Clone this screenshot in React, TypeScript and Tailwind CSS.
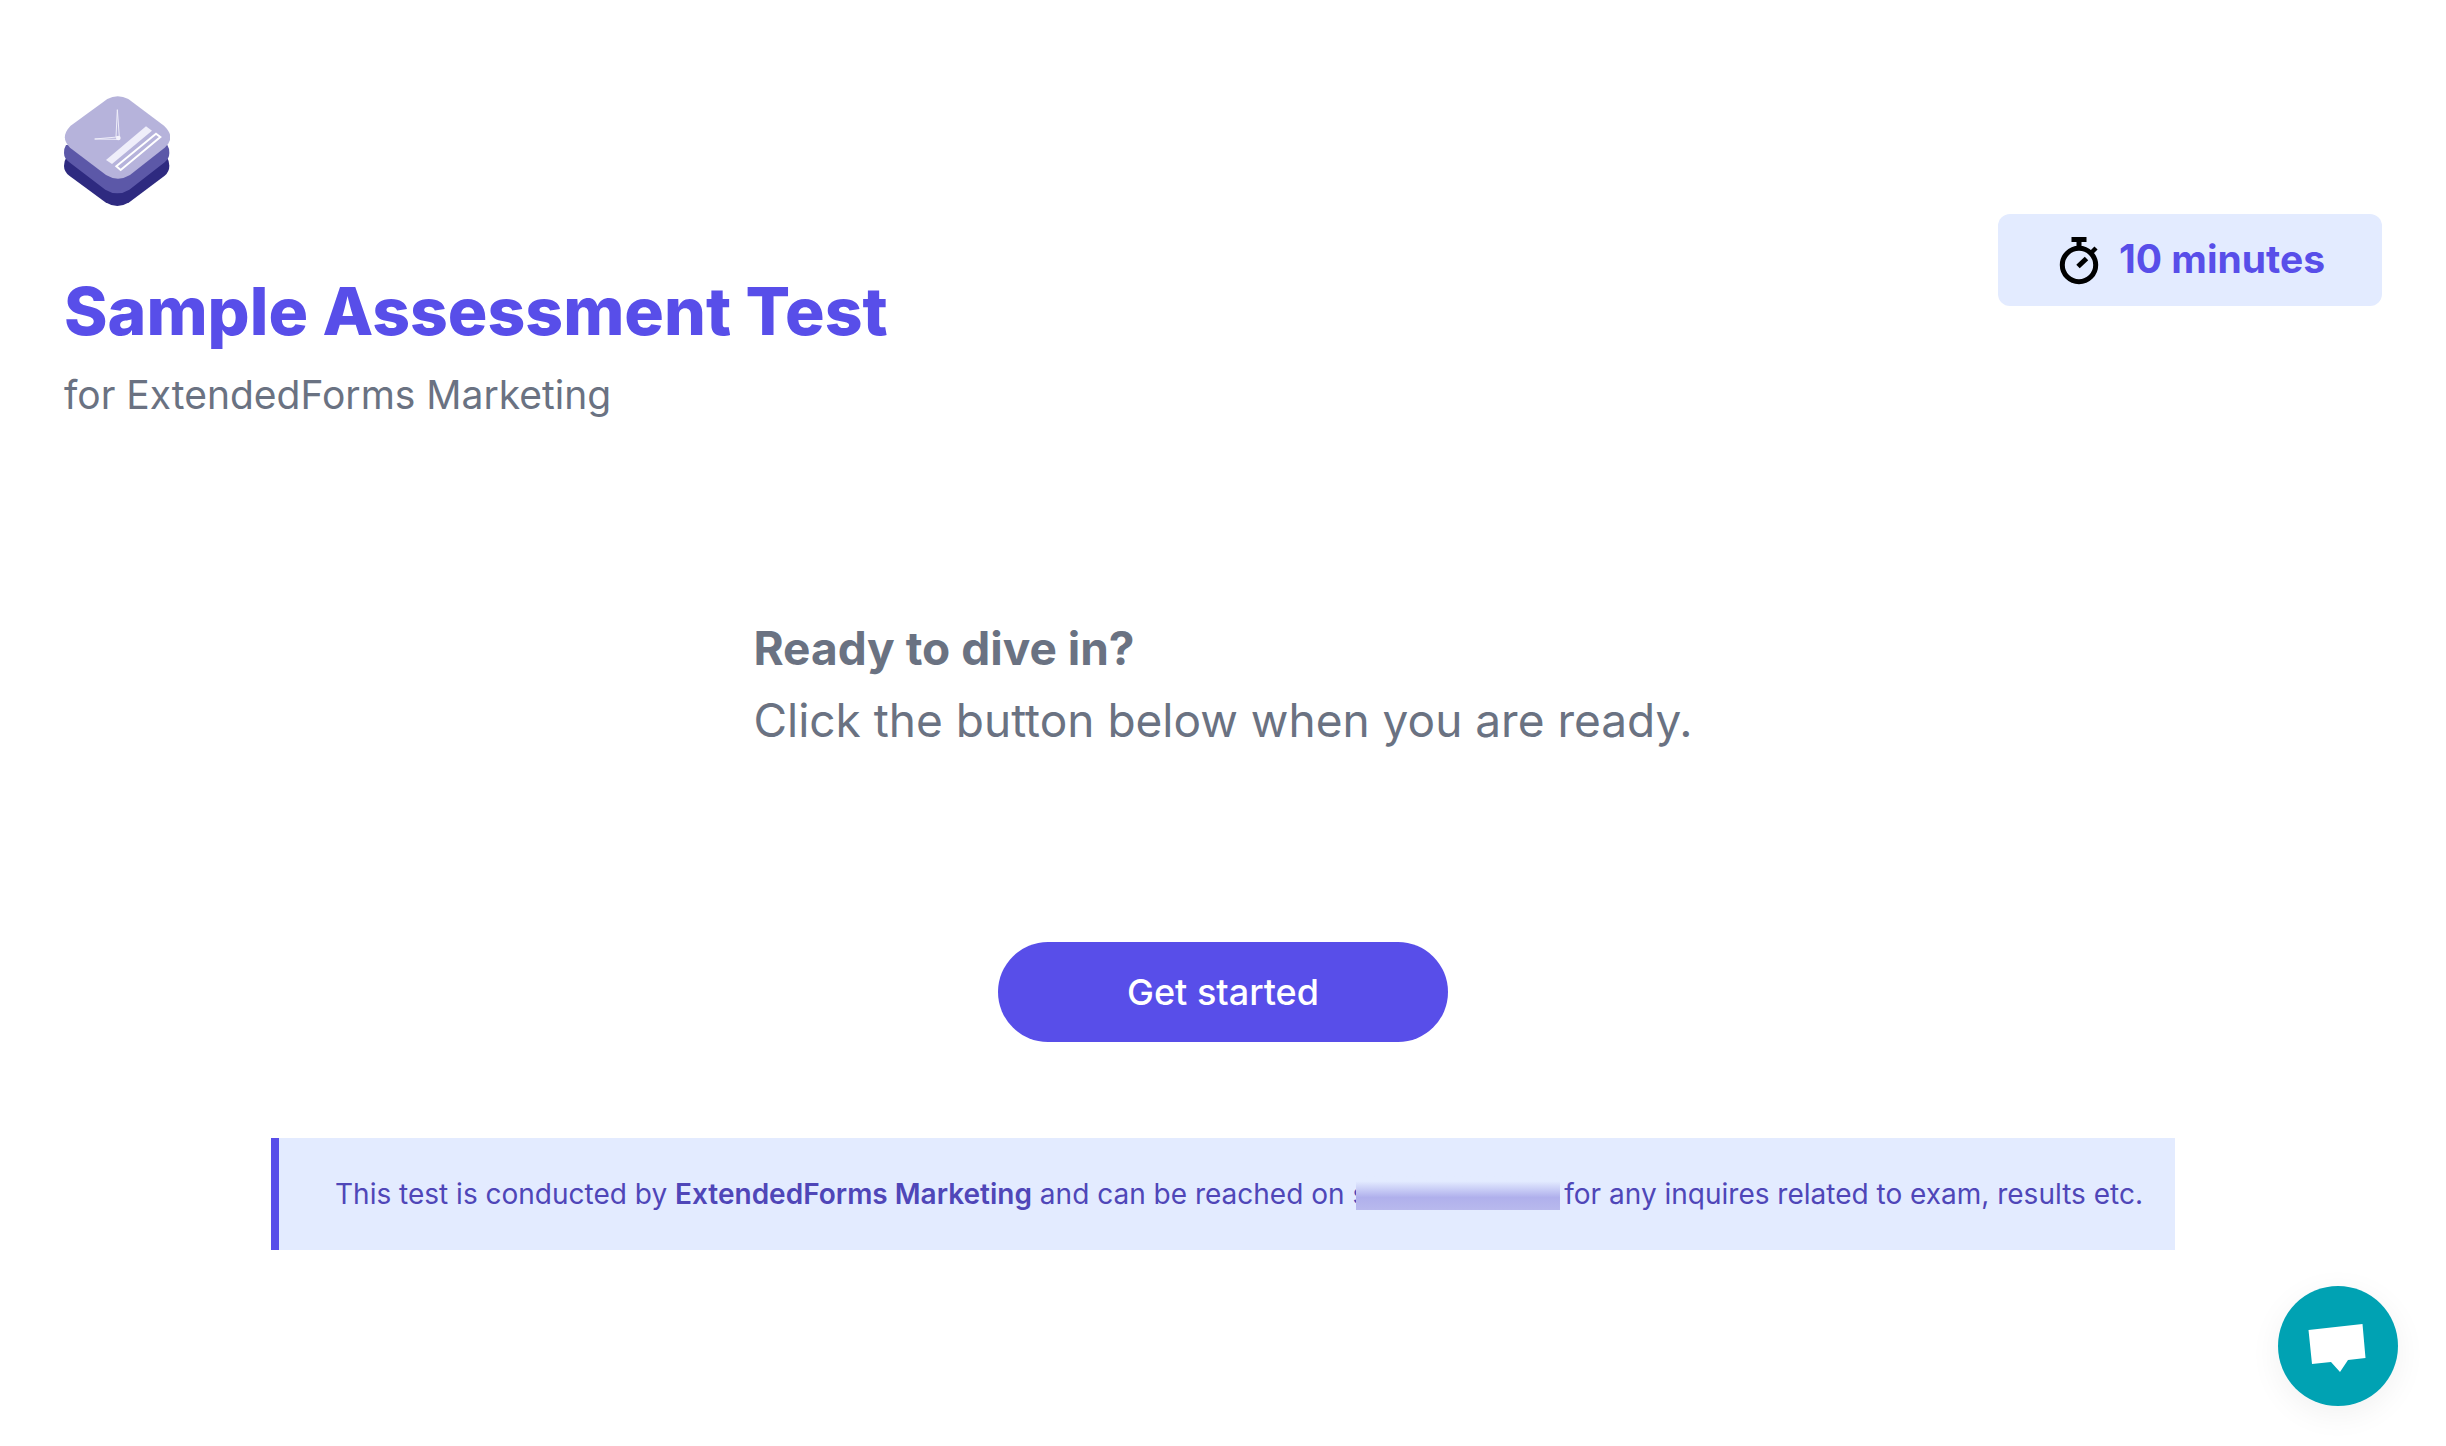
import React from 'react';

const organizer = 'ExtendedForms Marketing';

function Logo() {
  return (
    <svg
      viewBox="42 47 318 333"
      className="w-[106px] h-[111px]"
      role="img"
      aria-label="Logo">
      <path
        fill="#2e2a80"
        d="M48 234 L352 234 Q358 242 358 256 Q358 274 344 286 L238 366 Q202 388 166 366 L58 286 Q42 274 42 256 Q42 242 48 234 Z"
      />
      <path
        fill="#5c58a8"
        d="M48 194 L352 194 Q358 203 358 218 Q358 234 344 246 L238 328 Q202 350 166 328 L58 246 Q42 234 42 218 Q42 203 48 194 Z"
      />
      <path
        fill="#b6b3db"
        d="M172 56 Q203 39 235 56 L342 136 Q379 171 344 202 L240 284 Q204 306 168 284 L60 202 Q28 171 62 136 Z"
      />
      <path fill="#efeefa" d="M168 239 L288 138 L306 151 L186 251 Z" />
      <path
        fill="none"
        stroke="#fff"
        strokeWidth="6"
        d="M199 258 L318 160 L331 170 L212 269 Z"
      />
      <path
        fill="none"
        stroke="#efeefa"
        strokeWidth="3"
        d="M202 88 L198 170 L208 170 Z M134 176 L202 170 L204 177 Z"
      />
      <circle cx="205" cy="173" r="7" fill="#f4f3fc" />
    </svg>
  );
}

function StopwatchIcon() {
  return (
    <svg
      viewBox="0 0 40 50"
      className="w-10 h-[50px]"
      fill="none"
      stroke="#000"
      strokeWidth="5"
      aria-hidden="true">
      <circle cx="20" cy="30" r="16.7" />
      <path d="M12.5 4.5h15M20 4v10" />
      <path d="M31.5 18.5l5.5-5.5" strokeWidth="4.5" />
      <path d="M19 31.5l8.5-8" />
    </svg>
  );
}

export default function App() {
  return (
    <div className="min-h-screen bg-white px-16 pt-24 pb-10 font-['Inter',sans-serif]">
      <header className="flex items-center justify-between">
        <div>
          <Logo />
          <h1 className="mt-16 text-[66px] leading-20 font-extrabold text-[#584ee9]">
            Sample Assessment Test
          </h1>
          <p className="mt-4 text-[39px] leading-14 text-gray-500">
            for {organizer}
          </p>
        </div>
        <div className="flex h-[92px] w-96 items-center justify-center gap-5 rounded-xl bg-[#e3ebff] pl-1 text-[39px] font-bold text-[#584ee9]">
          <StopwatchIcon />
          10 minutes
        </div>
      </header>

      <main className="mt-[189px] flex flex-col items-center">
        <div className="text-[46px] leading-[72px] text-gray-500">
          <h2 className="font-bold">Ready to dive in?</h2>
          <p>Click the button below when you are ready.</p>
        </div>
        <button className="mt-[186px] h-[100px] w-[450px] rounded-full bg-[#584ee9] text-4xl font-medium text-white cursor-pointer">
          Get started
        </button>
        <p className="mt-24 border-l-8 border-[#584ee9] bg-[#e3ebff] py-9 pr-8 pl-14 text-[28px] leading-10 text-[#4f46b8]">
          This test is conducted by{' '}
          <strong className="font-semibold">{organizer}</strong> and can be
          reached on{' '}
          <span className="relative inline-block w-[204px]">
            s
            <span className="absolute top-0 left-1 h-9 w-51 bg-linear-to-b from-[#e3ebff] from-20% via-[#b0b0ec] via-65% to-[#b8b9ed]" />
          </span>{' '}
          for any inquires related to exam, results etc.
        </p>
      </main>

      <button
        aria-label="Open chat"
        className="fixed right-12 bottom-10 size-30 rounded-full bg-[#00a2b3] shadow-[0_8px_32px_rgba(0,0,0,0.06)] cursor-pointer">
        <svg viewBox="0 0 120 120" className="size-30" aria-hidden="true">
          <path
            fill="#fff"
            d="M30.5 44 L84.5 38 L87.5 72 L70 74 L62 86 L53 76 L34 78 Z"
          />
        </svg>
      </button>
    </div>
  );
}
